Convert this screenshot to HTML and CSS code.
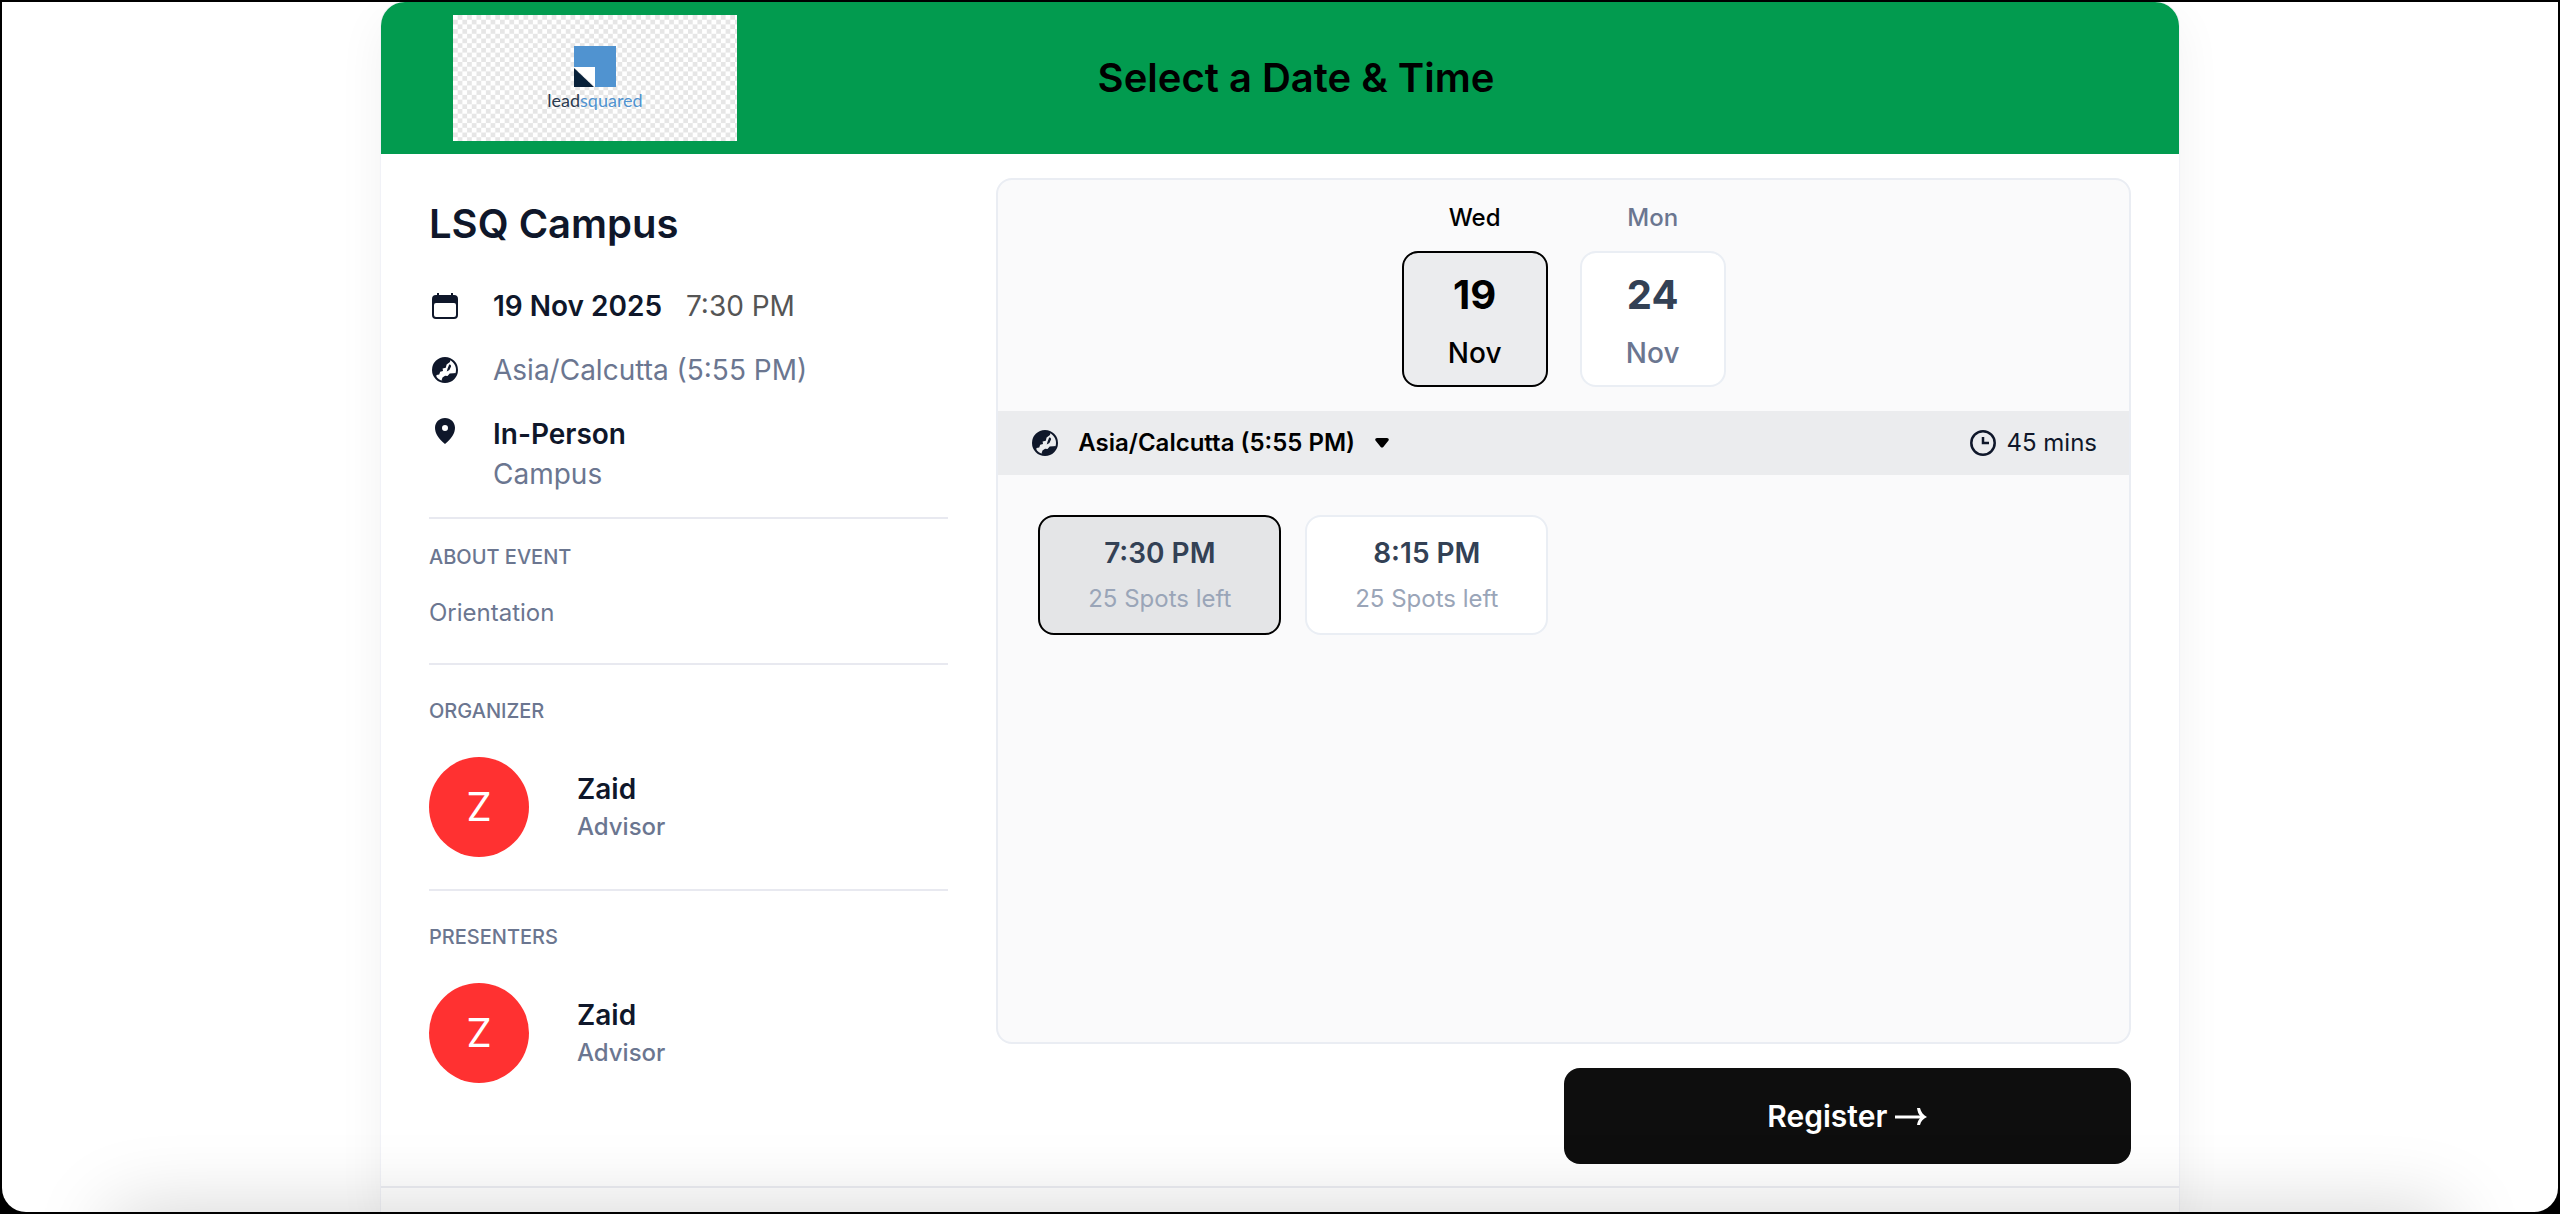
FILE: index.html
```html
<!DOCTYPE html>
<html lang="en">
<head>
  <meta charset="UTF-8">
  <meta name="viewport" content="width=device-width, initial-scale=1.0">
  <title>LSQ Campus - Select a Date &amp; Time</title>
  <link rel="stylesheet" href="styles.css">
</head>
<body>
  <!-- Shared icons -->
  <svg class="sprite" aria-hidden="true">
    <symbol id="icon-globe" viewBox="0 0 26 26">
      <circle cx="13" cy="13" r="12" fill="none" stroke="currentColor" stroke-width="2"/>
      <path fill="currentColor" d="M13 1C6.4 1 1 6.4 1 13c0 3.2 1.200 6 3.200 8.200l.3-3.200 2.700-.6 1-2.600 2.800-.9-.4-2.400 3.200-.8.8-3.200 3.400-2.400L18.500 2.300C16.800 1.400 15 1 13 1z"/>
      <path fill="currentColor" d="M17.200 7.500c1.300-.4 2.200.8 1.700 2.200l-1.500 3.400-2.700 1.500 1-3.300z"/>
      <path fill="currentColor" d="M10.500 20.500l2.600-1.800 2.400.2 2.200-2.300 3.600-.3 2.700-.3c-1.400 5-5.700 8.500-11 8.900l-3.500-1.300z"/>
    </symbol>
  </svg>

  <div class="window">
    <main class="card">
      <header class="card-header">
        <svg class="logo" viewBox="0 0 284 126" role="img" aria-label="leadsquared">
          <defs>
            <pattern id="checker" width="9.4" height="9.4" patternUnits="userSpaceOnUse">
              <rect width="9.4" height="9.4" fill="#fff"/>
              <path fill="#e6e6e6" d="M4.7 0h4.700v4.700H4.700zM0 4.700h4.700v4.700H0z"/>
            </pattern>
          </defs>
          <rect width="284" height="126" fill="url(#checker)"/>
          <path fill="#5093d0" d="M121 31h42v41h-21V52h-21z"/>
          <path fill="#fff" d="M121 52h21v20z"/>
          <path fill="#08213a" d="M121 53v19h20z"/>
          <text class="logo-text" x="142" y="92" text-anchor="middle"><tspan fill="#2b3a4f">lead</tspan><tspan fill="#5093d0">squared</tspan></text>
        </svg>
        <h1>Select a Date &amp; Time</h1>
      </header>

      <div class="card-body">
        <aside class="event">
          <section class="event-summary">
            <h2>LSQ Campus</h2>
            <div class="detail">
              <svg class="icon" viewBox="0 0 26 26" aria-hidden="true">
                <path fill="currentColor" d="M5 0h2v2h12V0h2v2h1a4 4 0 0 1 4 4v16a4 4 0 0 1-4 4H4a4 4 0 0 1-4-4V6a4 4 0 0 1 4-4h1zM4 10a2 2 0 0 0-2 2v10a2 2 0 0 0 2 2h18a2 2 0 0 0 2-2V12a2 2 0 0 0-2-2z"/>
              </svg>
              <p><strong>19 Nov 2025</strong> <span class="time">7:30 PM</span></p>
            </div>
            <div class="detail">
              <svg class="icon" aria-hidden="true"><use href="#icon-globe"/></svg>
              <p>Asia/Calcutta (5:55 PM)</p>
            </div>
            <div class="detail location">
              <svg class="icon" viewBox="0 0 26 26" aria-hidden="true">
                <path fill="currentColor" fill-rule="evenodd" d="M13 0C7.300 0 3 4.300 3 9.800 3 15.500 6.500 20.500 13 26c6.500-5.500 10-10.500 10-16.200C23 4.300 18.700 0 13 0zm0 7a3 3 0 1 1 0 6 3 3 0 0 1 0-6z"/>
              </svg>
              <p><strong>In-Person</strong><br>Campus</p>
            </div>
          </section>

          <section class="about">
            <h3>About Event</h3>
            <p>Orientation</p>
          </section>

          <section class="people">
            <h3>Organizer</h3>
            <div class="person">
              <div class="avatar">Z</div>
              <div>
                <div class="name">Zaid</div>
                <div class="role">Advisor</div>
              </div>
            </div>
          </section>

          <section class="people">
            <h3>Presenters</h3>
            <div class="person">
              <div class="avatar">Z</div>
              <div>
                <div class="name">Zaid</div>
                <div class="role">Advisor</div>
              </div>
            </div>
          </section>
        </aside>

        <div class="booking">
          <div class="picker">
            <div class="dates">
              <div class="date selected">
                <span class="weekday">Wed</span>
                <button type="button" class="date-btn" aria-pressed="true"><b>19</b><span>Nov</span></button>
              </div>
              <div class="date">
                <span class="weekday">Mon</span>
                <button type="button" class="date-btn" aria-pressed="false"><b>24</b><span>Nov</span></button>
              </div>
            </div>

            <div class="zone-bar">
              <label class="zone">
                <svg class="icon" aria-hidden="true"><use href="#icon-globe"/></svg>
                <select class="zone-select" aria-label="Time zone">
                  <option>Asia/Calcutta (5:55 PM)</option>
                </select>
                <svg class="caret" viewBox="0 0 14 10" aria-hidden="true">
                  <path fill="currentColor" d="M2 0h10c1.500 0 2.400 1.600 1.300 2.800L8.300 8.900c-.7.900-1.900.9-2.600 0L.7 2.800C-.4 1.600.5 0 2 0z"/>
                </svg>
              </label>
              <div class="duration">
                <svg class="icon" viewBox="0 0 26 26" fill="none" stroke="currentColor" stroke-width="2.500" aria-hidden="true">
                  <circle cx="13" cy="13" r="11.700"/>
                  <path d="M13 7v6h6"/>
                </svg>
                45 mins
              </div>
            </div>

            <div class="slots">
              <button type="button" class="slot selected"><b>7:30 PM</b><span>25 Spots left</span></button>
              <button type="button" class="slot"><b>8:15 PM</b><span>25 Spots left</span></button>
            </div>
          </div>

          <button type="submit" class="register">
            Register
            <svg class="arrow" viewBox="0 0 32 18" aria-hidden="true">
              <path fill="none" stroke="currentColor" stroke-width="3" d="M0 10h29"/>
              <path fill="currentColor" d="M22 1h3c1 4 3 7 7 9-4 2-6 4-7 8h-3c.5-3 1.500-5.500 4-8-2.500-2.500-3.500-5.500-4-9z"/>
            </svg>
          </button>
        </div>
      </div>

      <footer class="card-footer"></footer>
    </main>
  </div>
</body>
</html>
```
FILE: styles.css
```css
* {
  box-sizing: border-box;
}

body {
  margin: 0;
  padding: 2px;
  height: 100vh;
  background: #000;
  color: #0f172a;
  font-family: Inter, "Liberation Sans", sans-serif;
  font-size: 28px;
  line-height: 40px;
}

h1, h2, h3, p {
  margin: 0;
}

button, select {
  font: inherit;
  color: inherit;
  cursor: pointer;
}

.sprite {
  position: absolute;
  width: 0;
  height: 0;
}

.icon {
  width: 26px;
  height: 26px;
  flex: none;
  color: #0f172a;
}

/* Browser window with rounded bottom corners */
.window {
  position: relative;
  height: 100%;
  padding: 0 48px;
  overflow: hidden;
  display: flex;
  justify-content: center;
  background: #fff;
  border-radius: 0 0 24px 24px;
}

/* Soft shade along the bottom edge */
.window::after {
  content: "";
  position: absolute;
  top: 100%;
  left: 110px;
  right: 110px;
  height: 80px;
  box-shadow: 0 0 80px rgba(0, 0, 0, 0.18);
  pointer-events: none;
}

.card {
  flex: 1;
  max-width: 1798px;
  min-height: 100%;
  display: flex;
  flex-direction: column;
  background: #fff;
  border-radius: 24px 24px 0 0;
  box-shadow: 0 0 0 1px #f1f2f7, 0 16px 48px rgba(15, 23, 42, 0.06);
}

.card-header {
  display: grid;
  grid-template-columns: 1fr auto 1fr;
  align-items: center;
  padding: 13px 40px 13px 72px;
  background: #029b4f;
  border-radius: 24px 24px 0 0;
  color: #000;
}

.card-header h1 {
  font-size: 40px;
  font-weight: 600;
  line-height: 48px;
}

.logo {
  width: 284px;
  height: 126px;
  display: block;
}

.logo-text {
  font-family: Lato, sans-serif;
  font-size: 18px;
  font-weight: 400;
}

.card-body {
  display: flex;
  gap: 48px;
  padding: 24px 48px 22px;
}

/* Left column */
.event {
  flex: 519;
}

.event section + section {
  border-top: 2px solid #e8e9f0;
}

.event-summary {
  display: flex;
  flex-direction: column;
  gap: 24px;
  padding: 22px 0 23px;
  color: #6b7690;
}

.event-summary h2 {
  font-size: 40px;
  font-weight: 600;
  line-height: 48px;
  margin-bottom: 14px;
  color: #0f172a;
}

.detail {
  display: flex;
  align-items: center;
  gap: 35px;
  padding-left: 3px;
}

.detail strong {
  font-weight: 600;
  color: #0f172a;
}

.detail .time {
  margin-left: 16px;
  color: #555;
}

.location {
  align-items: flex-start;
}

.location .icon {
  margin-top: 4px;
}

.event h3 {
  font-size: 20px;
  font-weight: 500;
  line-height: 32px;
  text-transform: uppercase;
  color: #6b7690;
}

.about {
  padding: 22px 0 32px;
  font-size: 24px;
  color: #6b7690;
}

.about p {
  margin-top: 22px;
  line-height: 36px;
}

.people {
  padding: 30px 0 32px;
}

.person {
  display: flex;
  align-items: center;
  gap: 48px;
  margin-top: 30px;
}

.avatar {
  width: 100px;
  height: 100px;
  display: flex;
  align-items: center;
  justify-content: center;
  border-radius: 50%;
  background: #ff3131;
  color: #fff;
  font-size: 40px;
}

.name {
  font-weight: 600;
}

.role {
  font-size: 24px;
  font-weight: 500;
  line-height: 36px;
  color: #6b7690;
}

/* Right column */
.booking {
  flex: 1134;
  display: flex;
  flex-direction: column;
  gap: 24px;
}

.picker {
  min-height: 866px;
  border: 2px solid #eaedf3;
  border-radius: 16px;
  background: #fafafb;
}

.dates {
  display: flex;
  justify-content: center;
  gap: 32px;
  padding: 22px 0 24px;
}

.date {
  display: flex;
  flex-direction: column;
  align-items: center;
  gap: 17px;
}

.weekday {
  font-size: 24px;
  font-weight: 500;
  line-height: 32px;
  color: #6b7690;
}

.date-btn {
  width: 146px;
  height: 136px;
  padding: 6px 0 0;
  display: flex;
  flex-direction: column;
  align-items: center;
  justify-content: center;
  gap: 14px;
  border: 2px solid #eaeef4;
  border-radius: 16px;
  background: #fff;
  font-weight: 500;
  color: #6b7690;
}

.date-btn b {
  font-size: 40px;
  font-weight: 700;
  line-height: 48px;
  color: #334155;
}

.selected .weekday,
.selected .date-btn,
.selected .date-btn b {
  color: #000;
}

.selected .date-btn {
  border-color: #000;
  background: #ebecee;
}

.zone-bar {
  display: flex;
  align-items: center;
  justify-content: space-between;
  height: 64px;
  padding: 0 32px 0 34px;
  background: #ebecee;
  font-size: 24px;
}

.zone {
  display: flex;
  align-items: center;
  gap: 20px;
  color: #000;
}

.zone-select {
  appearance: none;
  padding: 0;
  border: 0;
  background: none;
  font-weight: 600;
}

.caret {
  width: 14px;
  height: 10px;
}

.duration {
  display: flex;
  align-items: center;
  gap: 10px;
}

.slots {
  display: grid;
  grid-template-columns: repeat(auto-fill, 243px);
  gap: 24px;
  padding: 40px;
}

.slot {
  height: 120px;
  padding: 2px 0 0;
  display: flex;
  flex-direction: column;
  align-items: center;
  justify-content: center;
  gap: 6px;
  border: 2px solid #eaeef4;
  border-radius: 16px;
  background: #fff;
  color: #334155;
}

.slot b {
  font-weight: 600;
}

.slot span {
  font-size: 24px;
  color: #9aa5b8;
}

.slot.selected {
  border-color: #000;
  background: #e4e5e7;
}

.register {
  align-self: flex-end;
  width: 50%;
  height: 96px;
  display: flex;
  align-items: center;
  justify-content: center;
  gap: 8px;
  border: 0;
  border-radius: 16px;
  background: #0e0e0e;
  color: #fff;
  font-size: 30px;
  font-weight: 600;
}

.arrow {
  width: 32px;
  height: 18px;
}

.card-footer {
  flex: 1;
  border-top: 2px solid #edeef3;
}
```
